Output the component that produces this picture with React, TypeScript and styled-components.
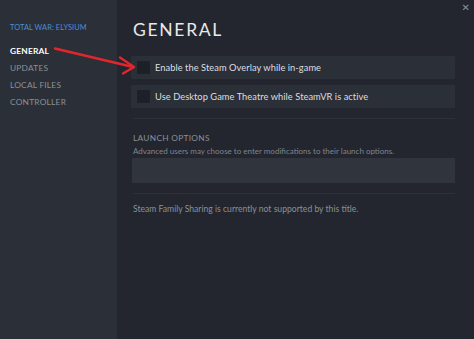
import React from "react";
import styled, { createGlobalStyle } from "styled-components";

const GlobalStyle = createGlobalStyle`
  html, body {
    margin: 0;
    padding: 0;
    background: #23262e;
  }
  body {
    font-family: "Lato", "Open Sans", sans-serif;
  }
`;

const Window = styled.div`
  position: relative;
  display: flex;
  width: 474px;
  height: 339px;
  overflow: hidden;
  background: #23262e;
`;

const Sidebar = styled.nav`
  display: flex;
  flex-direction: column;
  width: 117px;
  flex-shrink: 0;
  padding: 23px 0 0 10px;
  box-sizing: border-box;
  background: #2b2f37;
`;

const GameTitle = styled.div`
  font-size: 7.4px;
  color: #4b8ed6;
  letter-spacing: 0.1px;
  margin-bottom: 11px;
`;

const NavItem = styled.div<{ $active?: boolean }>`
  font-size: 8.4px;
  line-height: 17px;
  letter-spacing: 0.2px;
  color: ${(p) => (p.$active ? "#ffffff" : "#8a9099")};
  font-weight: ${(p) => (p.$active ? 700 : 400)};
`;

const Main = styled.main`
  flex: 1;
  display: flex;
  flex-direction: column;
  padding: 19px 19px 0 14px;
  box-sizing: border-box;
`;

const Heading = styled.h1`
  margin: 0 0 0 2px;
  font-size: 17.5px;
  font-weight: 400;
  letter-spacing: 1.7px;
  color: #e8e9eb;
  line-height: 22px;
`;

const Close = styled.div`
  position: absolute;
  top: 2px;
  right: 4px;
  font-size: 10px;
  color: #8a9099;
  font-family: "DejaVu Sans", sans-serif;
`;

const OptionList = styled.div`
  display: flex;
  flex-direction: column;
  gap: 6px;
  margin-top: 15px;
`;

const OptionRow = styled.label`
  display: flex;
  align-items: center;
  gap: 5px;
  height: 23px;
  padding: 0 6px;
  background: #2b2f38;
  border-radius: 1px;
`;

const Checkbox = styled.span`
  width: 13px;
  height: 13px;
  background: #1d2027;
  border-radius: 1px;
  flex-shrink: 0;
`;

const OptionText = styled.span`
  font-size: 9.3px;
  color: #dcdee1;
  letter-spacing: 0.05px;
`;

const Divider = styled.div`
  height: 1px;
  background: #2c3038;
  margin: 10px 0 0 2px;
`;

const SectionLabel = styled.div`
  margin: 14px 0 0 2px;
  font-size: 8.3px;
  color: #8a9099;
  letter-spacing: 0.3px;
`;

const Hint = styled.div`
  margin: 3px 0 0 2px;
  font-size: 8px;
  color: #7f858e;
`;

const LaunchInput = styled.div`
  height: 25px;
  margin: 2px 0 0 1px;
  background: #30343d;
  border-radius: 1px;
`;

const Note = styled.div`
  margin: 10px 0 0 2px;
  font-size: 8.6px;
  color: #8a9099;
`;

const Arrow = styled.svg`
  position: absolute;
  left: 0;
  top: 0;
  pointer-events: none;
`;

export default function App() {
  return (
    <>
      <GlobalStyle />
      <Window>
        <Sidebar>
          <GameTitle>TOTAL WAR: ELYSIUM</GameTitle>
          <NavItem $active>GENERAL</NavItem>
          <NavItem>UPDATES</NavItem>
          <NavItem>LOCAL FILES</NavItem>
          <NavItem>CONTROLLER</NavItem>
        </Sidebar>
        <Main>
          <Heading>GENERAL</Heading>
          <OptionList>
            <OptionRow>
              <Checkbox />
              <OptionText>Enable the Steam Overlay while in-game</OptionText>
            </OptionRow>
            <OptionRow>
              <Checkbox />
              <OptionText>Use Desktop Game Theatre while SteamVR is active</OptionText>
            </OptionRow>
          </OptionList>
          <Divider />
          <SectionLabel>LAUNCH OPTIONS</SectionLabel>
          <Hint>Advanced users may choose to enter modifications to their launch options.</Hint>
          <LaunchInput />
          <Divider />
          <Note>Steam Family Sharing is currently not supported by this title.</Note>
        </Main>
        <Close>✕</Close>
        <Arrow width="474" height="339" viewBox="0 0 474 339">
          <path d="M55 48.5 L131 66.5" stroke="#e2262d" strokeWidth="2.4" strokeLinecap="round" fill="none" />
          <path d="M120 57.5 L134 67 L123 73.5" stroke="#e2262d" strokeWidth="2.4" strokeLinecap="round" strokeLinejoin="round" fill="none" />
        </Arrow>
      </Window>
    </>
  );
}
